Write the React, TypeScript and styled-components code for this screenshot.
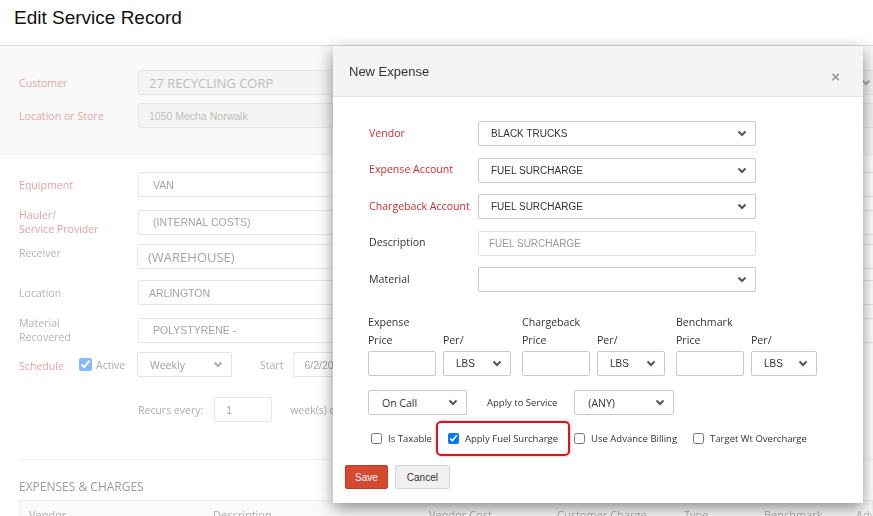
import React from 'react'
import styled, { createGlobalStyle } from 'styled-components'

const GlobalStyle = createGlobalStyle`
  html, body {
    margin: 0;
    padding: 0;
    overflow: hidden;
    background: #fff;
  }
  body {
    font-family: 'Open Sans', 'Liberation Sans', Arial, sans-serif;
    color: #333;
  }
  * {
    box-sizing: border-box;
  }
`

const Page = styled.div`
  position: relative;
  width: 873px;
  height: 516px;
  overflow: hidden;
`

const Header = styled.div`
  height: 46px;
  padding: 7px 14px 0;
  border-bottom: 1px solid #ddd;
`

const Title = styled.h1`
  margin: 0;
  font: 400 19px/22px 'Liberation Sans', Arial, sans-serif;
  color: #111;
`

/* everything behind the dialog is washed out */
const Faded = styled.div`
  opacity: 0.5;
`

const GraySection = styled.div`
  padding: 24px 0 26px 19px;
  background: #f3f3f3;
  border-bottom: 1px solid #e2e2e2;
`

const WhiteSection = styled.div`
  padding: 17px 0 0 19px;
`

const Row = styled.div<{ $gap?: number }>`
  display: grid;
  grid-template-columns: 119px auto;
  align-items: center;
  height: 25px;
  margin-bottom: ${(p) => p.$gap ?? 11}px;
`

const FormLabel = styled.div<{ $tone?: 'red' | 'gray'; $top?: boolean }>`
  font-size: 10.6px;
  line-height: 14px;
  color: ${(p) => (p.$tone === 'red' ? '#cc3f3f' : '#666')};
  align-self: ${(p) => (p.$top ? 'start' : 'center')};
  padding-top: ${(p) => (p.$top ? '2px' : '0')};
`

const Field = styled.div<{
  $w: number
  $pl?: number
  $disabled?: boolean
  $big?: boolean
  $shift?: number
}>`
  display: flex;
  align-items: center;
  justify-content: space-between;
  width: ${(p) => p.$w}px;
  height: 25px;
  margin-left: ${(p) => p.$shift ?? 0}px;
  padding: 0 8px 0 ${(p) => p.$pl ?? 10}px;
  border: 1px solid #ccc;
  border-radius: 2px;
  background: ${(p) => (p.$disabled ? '#e9e9e9' : '#fff')};
  color: ${(p) => (p.$disabled ? '#777' : '#444')};
  font: ${(p) =>
    p.$big
      ? "13px 'Open Sans', sans-serif"
      : "10.5px 'Liberation Sans', Arial, sans-serif"};
  white-space: nowrap;
  overflow: hidden;
`

const ScheduleCell = styled.div`
  display: flex;
  align-items: center;

  input {
    margin: 0;
  }
`

const ScheduleLabel = styled(FormLabel)`
  width: 60px;
  padding-top: 2px;
`

const InlineText = styled.span<{ $ml?: number }>`
  margin-left: ${(p) => p.$ml ?? 0}px;
  font-size: 10.5px;
  color: #555;
  white-space: nowrap;
`

const Inline = styled.div<{ $pl?: number; $mt?: number }>`
  display: flex;
  align-items: center;
  height: 25px;
  padding-left: ${(p) => p.$pl ?? 0}px;
  margin-top: ${(p) => p.$mt ?? 0}px;
`

const Divider = styled.div`
  margin-top: 37px;
  border-top: 1px solid #e2e2e2;
`

const SectionTitle = styled.div`
  margin-top: 19px;
  font-size: 12px;
  line-height: 16px;
  color: #333;
  text-transform: uppercase;
`

const TableHead = styled.div`
  display: grid;
  grid-template-columns: 184px 216px 128px 127px 80px 92px 60px;
  margin-top: 5px;
  padding: 6px 0 0 9px;
  height: 30px;
  background: #f5f5f5;
  border: 1px solid #ddd;
  font-size: 11px;
  color: #555;
  white-space: nowrap;
`

/* dialog */

const Modal = styled.div`
  position: absolute;
  left: 333px;
  top: 46px;
  width: 530px;
  height: 457px;
  background: #fff;
  box-shadow: 0 5px 15px rgba(0, 0, 0, 0.45);
`

const ModalHeader = styled.div`
  display: flex;
  align-items: center;
  justify-content: space-between;
  height: 51px;
  padding: 0 23px 0 16px;
  background: #f4f4f4;
  border-bottom: 1px solid #e6e6e6;
`

const ModalTitle = styled.div`
  font: 13px 'Liberation Sans', Arial, sans-serif;
  color: #333;
`

const Close = styled.span`
  margin-top: 10px;
  font: 700 15px 'Liberation Sans', Arial, sans-serif;
  color: #999;
`

const ModalForm = styled.div`
  padding: 24px 0 0 36px;
`

const FieldGrid = styled.div`
  display: grid;
  grid-template-columns: 109px 278px;
  grid-auto-rows: 25px;
  row-gap: 11.5px;
  align-items: center;
`

const ModalLabel = styled.div<{ $red?: boolean }>`
  margin-top: -2px;
  font-size: 10.6px;
  color: ${(p) => (p.$red ? '#c9302c' : '#333')};
  white-space: nowrap;
`

const Select = styled.div<{ $w: number; $pl?: number; $open?: boolean }>`
  display: flex;
  align-items: center;
  justify-content: space-between;
  width: ${(p) => p.$w}px;
  height: 25px;
  padding: 0 8px 0 ${(p) => p.$pl ?? 12}px;
  border: 1px solid #c8c8c8;
  border-radius: 2px;
  background: #fff;
  font: ${(p) =>
    p.$open
      ? "10.5px 'Open Sans', sans-serif"
      : "10px 'Liberation Sans', Arial, sans-serif"};
  color: #333;
  white-space: nowrap;
`

const TextInput = styled.div<{ $w: number; $muted?: boolean }>`
  display: flex;
  align-items: center;
  width: ${(p) => p.$w}px;
  height: 25px;
  padding-left: 10px;
  border: 1px solid ${(p) => (p.$muted ? '#dedede' : '#c8c8c8')};
  border-radius: 2px;
  font: 10px 'Liberation Sans', Arial, sans-serif;
  color: #999;
`

const PriceRow = styled.div`
  display: flex;
  margin-top: 21px;
  margin-left: -1px;
`

const PriceGroup = styled.div`
  display: grid;
  grid-template-columns: 75px 79px;
  grid-template-rows: 18px 20px 25px;
`

const GroupTitle = styled.div`
  grid-column: 1 / -1;
  font-size: 10.6px;
  line-height: 18px;
  color: #333;
`

const SubLabel = styled.div`
  font-size: 10.6px;
  line-height: 18px;
  color: #333;
`

const OptionRow = styled.div`
  display: flex;
  align-items: center;
  margin-top: 14px;
  margin-left: -1px;
`

const SmallText = styled.span`
  margin: 0 17px 0 20px;
  font-size: 9.5px;
  color: #333;
`

const CheckRow = styled.div`
  display: flex;
  align-items: center;
  gap: 16px;
  height: 16px;
  margin-top: 15px;
  margin-left: 2px;
`

const CheckItem = styled.label<{ $marked?: boolean }>`
  position: relative;
  display: inline-flex;
  align-items: center;
  gap: 6px;
  font-size: 9.5px;
  color: #333;
  white-space: nowrap;

  input {
    width: 11px;
    height: 11px;
    margin: 0;
  }

  &::after {
    content: '';
    display: ${(p) => (p.$marked ? 'block' : 'none')};
    position: absolute;
    left: -12px;
    right: -12px;
    top: -11px;
    bottom: -11px;
    border: 2px solid #e3101b;
    border-radius: 5px;
    box-shadow: 0 0 3px rgba(227, 16, 27, 0.35);
  }
`

const Footer = styled.div`
  display: flex;
  gap: 7px;
  margin-top: 19px;
  padding-left: 12px;
`

const Button = styled.button<{ $primary?: boolean }>`
  height: 24px;
  padding: 0 ${(p) => (p.$primary ? 9 : 11)}px;
  border: 1px solid ${(p) => (p.$primary ? '#c13c25' : '#d6d6d6')};
  border-radius: 2px;
  background: ${(p) => (p.$primary ? '#d6482f' : '#f0f0f0')};
  color: ${(p) => (p.$primary ? '#fff' : '#333')};
  font: 10px 'Liberation Sans', Arial, sans-serif;
`

function Chevron() {
  return (
    <svg width='10' height='7' viewBox='0 0 10 7'>
      <path
        d='M1.5 1.5 L5 5 L8.5 1.5'
        fill='none'
        stroke='#555'
        strokeWidth='2'
      />
    </svg>
  )
}

const priceGroups = ['Expense', 'Chargeback', 'Benchmark']

const checks = [
  { label: 'Is Taxable', checked: false },
  { label: 'Apply Fuel Surcharge', checked: true, marked: true },
  { label: 'Use Advance Billing', checked: false },
  { label: 'Target Wt Overcharge', checked: false },
]

const columns = [
  'Vendor',
  'Description',
  'Vendor Cost',
  'Customer Charge',
  'Type',
  'Benchmark',
  'Adv',
]

export default function App() {
  return (
    <Page>
      <GlobalStyle />
      <Header>
        <Title>Edit Service Record</Title>
      </Header>

      <Faded>
        <GraySection>
          <Row $gap={8}>
            <FormLabel $tone='red'>Customer</FormLabel>
            <Field $w={742} $disabled $big>
              27 RECYCLING CORP
              <Chevron />
            </Field>
          </Row>
          <Row $gap={0}>
            <FormLabel $tone='red'>Location or Store</FormLabel>
            <Field $w={742} $disabled>
              1050 Mecha Norwalk
            </Field>
          </Row>
        </GraySection>

        <WhiteSection>
          <Row>
            <FormLabel $tone='red'>Equipment</FormLabel>
            <Field $w={742} $pl={14}>
              VAN
            </Field>
          </Row>
          <Row>
            <FormLabel $tone='red'>
              Hauler/
              <br />
              Service Provider
            </FormLabel>
            <Field $w={742} $pl={14}>
              (INTERNAL COSTS)
            </Field>
          </Row>
          <Row>
            <FormLabel $tone='gray' $top>
              Receiver
            </FormLabel>
            <Field $w={742} $big $shift={-1}>
              (WAREHOUSE)
            </Field>
          </Row>
          <Row>
            <FormLabel $tone='gray'>Location</FormLabel>
            <Field $w={742}>ARLINGTON</Field>
          </Row>
          <Row>
            <FormLabel $tone='gray'>
              Material
              <br />
              Recovered
            </FormLabel>
            <Field $w={742} $pl={14}>
              POLYSTYRENE -
            </Field>
          </Row>
          <Row $gap={0}>
            <ScheduleCell>
              <ScheduleLabel $tone='red'>Schedule</ScheduleLabel>
              <input type='checkbox' defaultChecked />
              <InlineText $ml={4}>Active</InlineText>
            </ScheduleCell>
            <Inline>
              <Select $w={95} $pl={12} $open style={{ marginLeft: -1 }}>
                Weekly
                <Chevron />
              </Select>
              <InlineText $ml={28}>Start</InlineText>
              <Field $w={120} $shift={10}>
                6/2/2020
              </Field>
            </Inline>
          </Row>
          <Inline $pl={119} $mt={20}>
            <InlineText>Recurs every:</InlineText>
            <Field $w={58} $pl={11} $shift={11}>
              1
            </Field>
            <InlineText $ml={18}>week(s) on</InlineText>
          </Inline>
          <Divider />
          <SectionTitle>Expenses &amp; Charges</SectionTitle>
          <TableHead>
            {columns.map((c) => (
              <span key={c}>{c}</span>
            ))}
          </TableHead>
        </WhiteSection>
      </Faded>

      <Modal>
        <ModalHeader>
          <ModalTitle>New Expense</ModalTitle>
          <Close>×</Close>
        </ModalHeader>

        <ModalForm>
          <FieldGrid>
            <ModalLabel $red>Vendor</ModalLabel>
            <Select $w={278}>
              BLACK TRUCKS
              <Chevron />
            </Select>
            <ModalLabel $red>Expense Account</ModalLabel>
            <Select $w={278}>
              FUEL SURCHARGE
              <Chevron />
            </Select>
            <ModalLabel $red>Chargeback Account</ModalLabel>
            <Select $w={278}>
              FUEL SURCHARGE
              <Chevron />
            </Select>
            <ModalLabel>Description</ModalLabel>
            <TextInput $w={278} $muted>
              FUEL SURCHARGE
            </TextInput>
            <ModalLabel>Material</ModalLabel>
            <Select $w={278}>
              <span />
              <Chevron />
            </Select>
          </FieldGrid>

          <PriceRow>
            {priceGroups.map((g) => (
              <PriceGroup key={g}>
                <GroupTitle>{g}</GroupTitle>
                <SubLabel>Price</SubLabel>
                <SubLabel>Per/</SubLabel>
                <TextInput $w={68} />
                <Select $w={g === 'Benchmark' ? 66 : 68}>
                  LBS
                  <Chevron />
                </Select>
              </PriceGroup>
            ))}
          </PriceRow>

          <OptionRow>
            <Select $w={99} $pl={13} $open>
              On Call
              <Chevron />
            </Select>
            <SmallText>Apply to Service</SmallText>
            <Select $w={100} $pl={13} $open>
              (ANY)
              <Chevron />
            </Select>
          </OptionRow>

          <CheckRow>
            {checks.map((c) => (
              <CheckItem key={c.label} $marked={c.marked}>
                <input type='checkbox' defaultChecked={c.checked} />
                {c.label}
              </CheckItem>
            ))}
          </CheckRow>
        </ModalForm>

        <Footer>
          <Button $primary>Save</Button>
          <Button>Cancel</Button>
        </Footer>
      </Modal>
    </Page>
  )
}
